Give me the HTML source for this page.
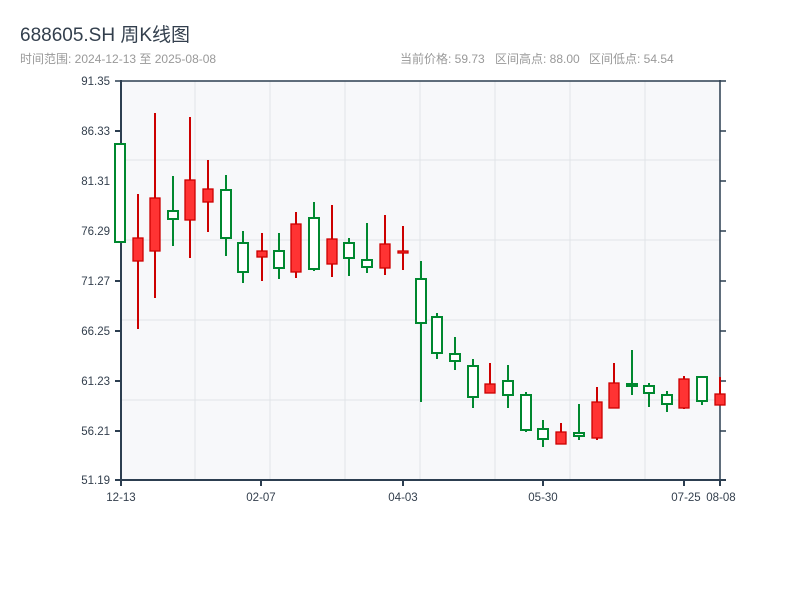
<!DOCTYPE html>
<html><head><meta charset="utf-8"><style>
body{margin:0;width:800px;height:600px;background:#fff;overflow:hidden}
svg{display:block}
text{font-family:"Liberation Sans","Noto Sans CJK SC",sans-serif}
</style></head><body>
<svg width="800" height="600" viewBox="0 0 800 600">
<text x="20" y="41" font-size="19" fill="#333f4d">688605.SH 周K线图</text>
<text x="20" y="63" font-size="12" fill="#999">时间范围: 2024-12-13 至 2025-08-08</text>
<text x="400" y="63" font-size="12" fill="#999">当前价格: 59.73</text>
<text x="495" y="63" font-size="12" fill="#999">区间高点: 88.00</text>
<text x="589" y="63" font-size="12" fill="#999">区间低点: 54.54</text>
<rect x="121" y="81" width="599" height="399" fill="#f7f8fa"/>
<g stroke="#e1e4e8" stroke-width="1">
<line x1="121" y1="160" x2="720" y2="160"/><line x1="121" y1="240" x2="720" y2="240"/><line x1="121" y1="320" x2="720" y2="320"/><line x1="121" y1="400" x2="720" y2="400"/>
<line x1="195" y1="81" x2="195" y2="480"/><line x1="270" y1="81" x2="270" y2="480"/><line x1="345" y1="81" x2="345" y2="480"/><line x1="420" y1="81" x2="420" y2="480"/><line x1="495" y1="81" x2="495" y2="480"/><line x1="570" y1="81" x2="570" y2="480"/><line x1="645" y1="81" x2="645" y2="480"/>
</g>
<g stroke="#2c3e50" stroke-width="2" fill="none">
<line x1="115" y1="81" x2="726" y2="81" stroke-width="1.5"/>
<line x1="121" y1="80" x2="121" y2="481"/>
<line x1="720" y1="80" x2="720" y2="481" stroke-width="1.5"/>
<line x1="116" y1="480" x2="726" y2="480"/>
<path d="M115 131h6M115 181h6M115 231h6M115 281h6M115 331h6M115 381h6M115 431h6M115 480h6"/>
<path d="M720 131h6M720 181h6M720 231h6M720 281h6M720 331h6M720 381h6M720 431h6" stroke-width="1.5"/>
<path d="M121 480v6M261 480v6M403 480v6M543 480v6M684 480v6M720 480v6"/>
</g>
<g font-size="11.5" fill="#333f4d" text-anchor="end">
<text x="110" y="85">91.35</text><text x="110" y="135">86.33</text><text x="110" y="185">81.31</text><text x="110" y="235">76.29</text><text x="110" y="285">71.27</text><text x="110" y="335">66.25</text><text x="110" y="385">61.23</text><text x="110" y="435">56.21</text><text x="110" y="484">51.19</text>
</g>
<g font-size="11.5" fill="#333f4d" text-anchor="middle">
<text x="121" y="501">12-13</text><text x="261" y="501">02-07</text><text x="403" y="501">04-03</text><text x="543" y="501">05-30</text><text x="686" y="501">07-25</text><text x="721" y="501">08-08</text>
</g>
<g stroke-width="2">
<g stroke="#00882f" fill="#fff">
<rect x="115" y="144" width="10" height="98"/>
<line x1="173" y1="176" x2="173" y2="246"/><rect x="168" y="211" width="10" height="8"/>
<line x1="226" y1="175" x2="226" y2="256"/><rect x="221" y="190" width="10" height="48"/>
<line x1="243" y1="231" x2="243" y2="283"/><rect x="238" y="243" width="10" height="29"/>
<line x1="279" y1="233" x2="279" y2="279"/><rect x="274" y="251" width="10" height="17"/>
<line x1="314" y1="202" x2="314" y2="271"/><rect x="309" y="218" width="10" height="51"/>
<line x1="349" y1="238" x2="349" y2="276"/><rect x="344" y="243" width="10" height="15"/>
<line x1="367" y1="223" x2="367" y2="273"/><rect x="362" y="260" width="10" height="7"/>
<line x1="421" y1="261" x2="421" y2="402"/><rect x="416" y="279" width="10" height="44"/>
<line x1="437" y1="313" x2="437" y2="359"/><rect x="432" y="317" width="10" height="36"/>
<line x1="455" y1="337" x2="455" y2="370"/><rect x="450" y="354" width="10" height="7"/>
<line x1="473" y1="359" x2="473" y2="408"/><rect x="468" y="366" width="10" height="31"/>
<line x1="508" y1="365" x2="508" y2="408"/><rect x="503" y="381" width="10" height="14"/>
<line x1="526" y1="392" x2="526" y2="432"/><rect x="521" y="395" width="10" height="35"/>
<line x1="543" y1="420" x2="543" y2="447"/><rect x="538" y="429" width="10" height="10"/>
<line x1="579" y1="404" x2="579" y2="440"/><rect x="574" y="433" width="10" height="3"/>
<line x1="632" y1="350" x2="632" y2="395"/><rect x="627" y="384" width="10" height="2" fill="#00882f"/>
<line x1="649" y1="383" x2="649" y2="407"/><rect x="644" y="386" width="10" height="7"/>
<line x1="667" y1="391" x2="667" y2="412"/><rect x="662" y="395" width="10" height="9"/>
<line x1="702" y1="376" x2="702" y2="405"/><rect x="697" y="377" width="10" height="24"/>
</g>
<g stroke="#cc0000" fill="#ff3333">
<line x1="138" y1="194" x2="138" y2="329"/><rect x="133" y="238" width="10" height="23" stroke-width="1.3"/>
<line x1="155" y1="113" x2="155" y2="298"/><rect x="150" y="198" width="10" height="53" stroke-width="1.3"/>
<line x1="190" y1="117" x2="190" y2="258"/><rect x="185" y="180" width="10" height="40" stroke-width="1.3"/>
<line x1="208" y1="160" x2="208" y2="232"/><rect x="203" y="189" width="10" height="13" stroke-width="1.3"/>
<line x1="262" y1="233" x2="262" y2="281"/><rect x="257" y="251" width="10" height="6" stroke-width="1.3"/>
<line x1="296" y1="212" x2="296" y2="278"/><rect x="291" y="224" width="10" height="48" stroke-width="1.3"/>
<line x1="332" y1="205" x2="332" y2="277"/><rect x="327" y="239" width="10" height="25" stroke-width="1.3"/>
<line x1="385" y1="215" x2="385" y2="275"/><rect x="380" y="244" width="10" height="24" stroke-width="1.3"/>
<line x1="403" y1="226" x2="403" y2="270"/><rect x="398" y="251" width="10" height="2" stroke-width="1.3"/>
<line x1="490" y1="363" x2="490" y2="393"/><rect x="485" y="384" width="10" height="9" stroke-width="1.3"/>
<line x1="561" y1="423" x2="561" y2="444"/><rect x="556" y="432" width="10" height="12" stroke-width="1.3"/>
<line x1="597" y1="387" x2="597" y2="440"/><rect x="592" y="402" width="10" height="36" stroke-width="1.3"/>
<line x1="614" y1="363" x2="614" y2="408"/><rect x="609" y="383" width="10" height="25" stroke-width="1.3"/>
<line x1="684" y1="376" x2="684" y2="409"/><rect x="679" y="379" width="10" height="29" stroke-width="1.3"/>
<line x1="720" y1="377" x2="720" y2="405"/><rect x="715" y="394" width="10" height="11" stroke-width="1.3"/>
</g>
</g>
</svg>
</body></html>
